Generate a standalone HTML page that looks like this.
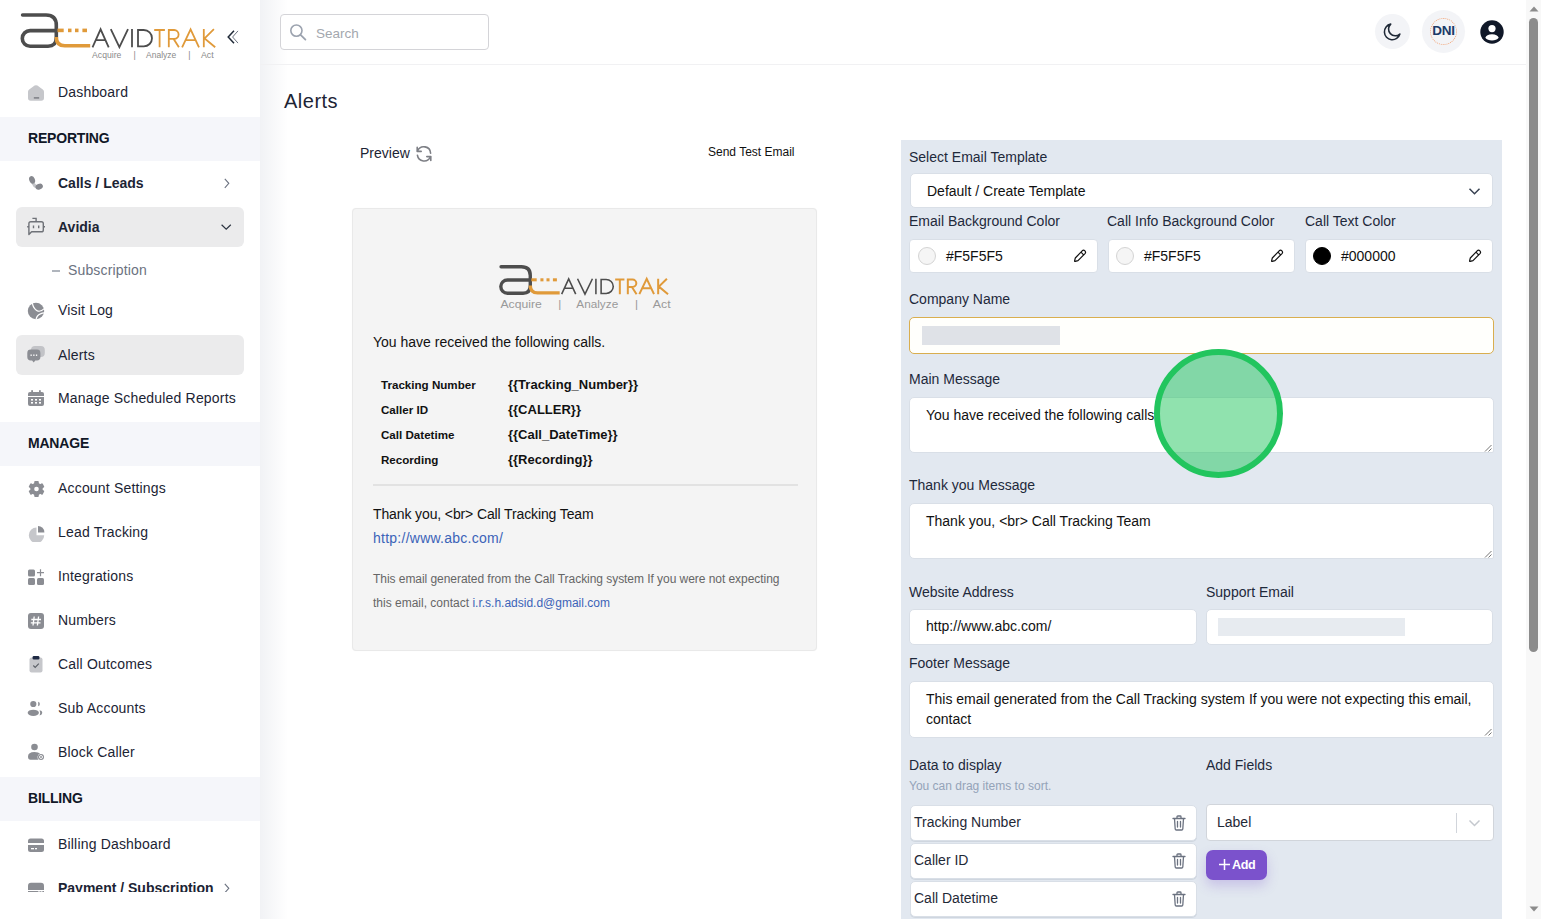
<!DOCTYPE html>
<html><head><meta charset="utf-8">
<style>
*{box-sizing:border-box;margin:0;padding:0}
html,body{width:1541px;height:919px;overflow:hidden;background:#fff;font-family:"Liberation Sans",sans-serif;color:#1c2434}
.abs{position:absolute}
#sb{position:absolute;left:0;top:0;width:260px;height:919px;background:#fff;overflow:hidden}
#sbshadow{position:absolute;left:260px;top:0;width:28px;height:919px;background:linear-gradient(to right,#f1f2f5,rgba(255,255,255,0))}
.it{position:absolute;left:16px;width:228px;height:40px;border-radius:6px}
.it .tx{position:absolute;left:42px;top:0;line-height:40px;font-size:14px;color:#1c2434;white-space:nowrap;letter-spacing:0.18px}
.it .ic{position:absolute;left:11px;top:12px;width:18px;height:17px}
.it.act{background:#ebebec}
.band{position:absolute;left:0;width:260px;height:44px;background:#f5f6fa}
.band span{position:absolute;left:28px;top:-1px;line-height:44px;font-size:14px;font-weight:bold;color:#111827;letter-spacing:-0.2px}
#hdr{position:absolute;left:260px;top:0;width:1266px;height:65px;border-bottom:1px solid #f1f1f3}
#search{position:absolute;left:280px;top:14px;width:209px;height:36px;border:1px solid #d4d4d8;border-radius:4px;background:#fff}
#scroll{position:absolute;left:1526px;top:0;width:15px;height:919px;background:#f8f8f8}
#thumb{position:absolute;left:1529px;top:18px;width:9px;height:634px;border-radius:5px;background:#8c8c8c}
.lbl{position:absolute;font-size:14px;color:#1e293b;white-space:nowrap}
.inp{position:absolute;background:#fff;border-radius:5px;border:1px solid #d9dfe7}
.itx{position:absolute;font-size:14px;color:#111;white-space:nowrap}
</style></head><body>
<div id="sb">

<!-- logo -->
<svg class="abs" style="left:0;top:0" width="260" height="70" viewBox="0 0 260 70">
<path d="M22.6 15 H46 Q56.3 15 56.3 25.3 V37.5 Q56.3 46.2 48 46.2 H30.1 A7.8 7.8 0 0 1 30.1 30.6 H56.3" fill="none" stroke="#4d4d4d" stroke-width="3.6" stroke-linecap="round"/>
<path d="M56.3 37 Q56.3 45.8 64.8 45.8 H90.2" fill="none" stroke="#e09a3a" stroke-width="3.6"/>
<rect x="57.5" y="28.6" width="6.200000000000003" height="3.6" fill="#e09a3a"/>
<rect x="68" y="28.6" width="3.5" height="3.6" fill="#e09a3a"/>
<rect x="75" y="28.6" width="3.5" height="3.6" fill="#e09a3a"/>
<rect x="82.4" y="28.6" width="4.599999999999994" height="3.6" fill="#e09a3a"/>
<path d="M92.5 47.3 L100.6 29.3 L108.7 47.3 M96 40.2 H105.3 M110.8 29.1 L119.4 47.2 L128 29.1 M132 29.1 V47.3 M138 30 H143.8 A8.2 8.2 0 0 1 143.8 46.4 H138 Z" fill="none" stroke="#4d4d4d" stroke-width="1.8"/>
<path d="M154.2 30 H164.9 M159.6 30 V47.3 M168.8 47.3 V30 H174.2 A4.4 4.4 0 0 1 174.2 38.8 H168.8 M173.5 38.8 L178.9 47.3 M182.1 47.3 L190.6 29.3 L199 47.3 M185.5 40.2 H195.7 M203.8 29.1 V47.3 M213.9 29.1 L204.6 38.4 L215.2 47.3" fill="none" stroke="#e09a3a" stroke-width="1.8"/>
<g font-family="Liberation Sans" font-size="8.6" fill="#8a8a8a">
<text x="92.1" y="57.6" textLength="29.2" lengthAdjust="spacingAndGlyphs">Acquire</text>
<text x="133.4" y="57.6">|</text>
<text x="146.1" y="57.6" textLength="30.2" lengthAdjust="spacingAndGlyphs">Analyze</text>
<text x="188.2" y="57.6">|</text>
<text x="200.9" y="57.6" textLength="12.7" lengthAdjust="spacingAndGlyphs">Act</text>
</g>
</svg>
<svg class="abs" style="left:220px;top:25px" width="24" height="24" viewBox="220 25 24 24"><path d="M234 30.7 L228.2 37 L234 43.2" fill="none" stroke="#1f2937" stroke-width="1.5"/><path d="M238 30.9 L232.6 37 L238 43.1" fill="none" stroke="#6b7280" stroke-width="1"/></svg>
<div class="it" style="top:72px"><svg class="abs" style="left:11px;top:12px" width="18" height="18" viewBox="0 0 18 18"><path d="M1 7.8 Q1 6.4 2.2 5.6 L7.6 1.6 Q9 0.7 10.4 1.6 L15.8 5.6 Q17 6.4 17 7.8 V14 Q17 16.8 14.2 16.8 H3.8 Q1 16.8 1 14 Z" fill="#c6c7cb"/><rect x="6.8" y="13" width="5.4" height="1.8" rx="0.3" fill="#86888e"/></svg><span class="tx" style="">Dashboard</span></div>
<div class="band" style="top:117px"><span>REPORTING</span></div>
<div class="it" style="top:163px"><svg class="abs" style="left:11px;top:10px" width="20" height="20" viewBox="27 173 20 20"><path d="M32.6 182.4 Q34 186 37.6 187.6" fill="none" stroke="#c3c4c8" stroke-width="3"/><ellipse cx="32.1" cy="179.9" rx="2.8" ry="3.9" transform="rotate(-22 32.1 179.9)" fill="#86888e"/><ellipse cx="39.2" cy="186.6" rx="3.8" ry="2.8" transform="rotate(-22 39.2 186.6)" fill="#86888e"/></svg><span class="tx" style="font-weight:bold;letter-spacing:0;">Calls / Leads</span><svg class="abs" style="left:207.5px;top:14.5px" width="6" height="11" viewBox="0 0 6 11"><path d="M0.8 0.8 L4.8 5.3 L0.8 9.8" fill="none" stroke="#6b7280" stroke-width="1.1"/></svg></div>
<div class="it act" style="top:207px"><svg class="abs" style="left:11px;top:9px" width="20" height="22" viewBox="27 216 20 22"><path d="M28.9 234.6 V223.6 Q28.9 221.7 30.8 221.7 H41.4 Q43.3 221.7 43.3 223.6 V229.9 Q43.3 231.8 41.4 231.8 H31.6 Z" fill="none" stroke="#6f7278" stroke-width="1.4" stroke-linejoin="round"/><path d="M32.4 218.4 H36.1 V221.7" fill="none" stroke="#6f7278" stroke-width="1.4"/><path d="M27.2 226.8 H28.9 M43.3 226.8 H45" stroke="#6f7278" stroke-width="1.4"/><path d="M33.5 225.4 V228.2 M38.7 225.4 V228.2" stroke="#6f7278" stroke-width="1.4"/></svg><span class="tx" style="font-weight:bold;letter-spacing:0;">Avidia</span><svg class="abs" style="left:204.5px;top:16.5px" width="11" height="7" viewBox="0 0 11 7"><path d="M0.6 0.8 L5.2 5.2 L9.8 0.8" fill="none" stroke="#2b3340" stroke-width="1.2"/></svg></div>
<div class="abs" style="left:52px;top:270px;width:8px;height:1.5px;background:#b0b5bd"></div><span class="abs" style="left:68px;top:261px;font-size:14px;color:#6b7280;line-height:18px;letter-spacing:0.15px">Subscription</span>
<div class="it" style="top:290px"><svg class="abs" style="left:11px;top:10px" width="20" height="20" viewBox="27 300 20 20"><circle cx="36" cy="311" r="8.2" fill="#8b8d93"/><path d="M32.3 302.8 Q33.2 308.6 37.4 310.9 Q40.6 312.2 44.6 308.4 M36 319.6 Q36.8 315.2 40.4 313.9 Q42.4 313.1 44.4 312.9" fill="none" stroke="#fff" stroke-width="1.2"/></svg><span class="tx" style="">Visit Log</span></div>
<div class="it act" style="top:335px"><svg class="abs" style="left:10px;top:9px" width="20" height="20" viewBox="26 344 20 20"><rect x="31" y="346" width="13.8" height="11" rx="4" fill="#c2c3c7"/><path d="M30.7 349.6 H37 Q40.4 349.6 40.4 353 V357 Q40.4 360.4 37 360.4 H35.3 L33.7 362.6 L32.1 360.4 H30.7 Q27.3 360.4 27.3 357 V353 Q27.3 349.6 30.7 349.6 Z" fill="#8b8d93"/><rect x="30.5" y="354.5" width="1.3" height="1.4" fill="#fff"/><rect x="33.2" y="354.5" width="1.3" height="1.4" fill="#fff"/><rect x="35.9" y="354.5" width="1.3" height="1.4" fill="#fff"/></svg><span class="tx" style="">Alerts</span></div>
<div class="it" style="top:378px"><svg class="abs" style="left:11px;top:11px" width="18" height="18" viewBox="0 0 18 18"><path d="M1 5 Q1 3 3 3 H15 Q17 3 17 5 V7 H1 Z" fill="#8b8d93"/><rect x="4.2" y="1" width="1.8" height="3.5" rx="0.8" fill="#8b8d93"/><rect x="12" y="1" width="1.8" height="3.5" rx="0.8" fill="#8b8d93"/><path d="M1 8 H17 V15 Q17 17 15 17 H3 Q1 17 1 15 Z" fill="#8b8d93"/><g fill="#fff"><rect x="4" y="10" width="2" height="1.6"/><rect x="8" y="10" width="2" height="1.6"/><rect x="12" y="10" width="2" height="1.6"/><rect x="4" y="13" width="2" height="1.6"/><rect x="8" y="13" width="2" height="1.6"/><rect x="12" y="13" width="2" height="1.6"/></g></svg><span class="tx" style="">Manage Scheduled Reports</span></div>
<div class="band" style="top:422px"><span>MANAGE</span></div>
<div class="it" style="top:468px"><svg class="abs" style="left:11px;top:12px" width="18" height="18" viewBox="0 0 18 18"><circle cx="9.5" cy="9" r="6.2" fill="#8b8d93"/><rect x="7.20" y="1.00" width="4.6" height="4" rx="1" transform="rotate(0 9.50 9.00)" fill="#8b8d93"/><rect x="7.20" y="1.00" width="4.6" height="4" rx="1" transform="rotate(60 9.50 9.00)" fill="#8b8d93"/><rect x="7.20" y="1.00" width="4.6" height="4" rx="1" transform="rotate(120 9.50 9.00)" fill="#8b8d93"/><rect x="7.20" y="1.00" width="4.6" height="4" rx="1" transform="rotate(180 9.50 9.00)" fill="#8b8d93"/><rect x="7.20" y="1.00" width="4.6" height="4" rx="1" transform="rotate(240 9.50 9.00)" fill="#8b8d93"/><rect x="7.20" y="1.00" width="4.6" height="4" rx="1" transform="rotate(300 9.50 9.00)" fill="#8b8d93"/><circle cx="9.5" cy="9" r="2.3" fill="#fff"/></svg><span class="tx" style="">Account Settings</span></div>
<div class="it" style="top:512px"><svg class="abs" style="left:11px;top:11.5px" width="18" height="18" viewBox="0 0 18 18"><path d="M9.5 3.6 A7.7 7.7 0 1 0 17.2 11.3 H9.5 Z" fill="#c6c7cb"/><path d="M11 2 A6.4 6.4 0 0 1 17.4 8.4 H11 Z" fill="#8b8d93"/></svg><span class="tx" style="">Lead Tracking</span></div>
<div class="it" style="top:556px"><svg class="abs" style="left:11px;top:12px" width="18" height="18" viewBox="0 0 18 18"><rect x="1" y="1.5" width="7" height="7" rx="1.5" fill="#8b8d93"/><rect x="1" y="10" width="7" height="7" rx="1.5" fill="#8b8d93"/><rect x="10" y="10" width="7" height="7" rx="1.5" fill="#8b8d93"/><path d="M13.5 1.2 V8.2 M10 4.7 H17" stroke="#8b8d93" stroke-width="1.2"/></svg><span class="tx" style="">Integrations</span></div>
<div class="it" style="top:600px"><svg class="abs" style="left:11px;top:11.7px" width="18" height="18" viewBox="0 0 18 18"><rect x="1" y="1" width="16" height="16" rx="3" fill="#8b8d93"/><path d="M7.2 4.5 L6 13.5 M11.6 4.5 L10.4 13.5 M4.3 7.5 H14 M3.8 10.8 H13.5" stroke="#fff" stroke-width="1.3"/></svg><span class="tx" style="">Numbers</span></div>
<div class="it" style="top:644px"><svg class="abs" style="left:11px;top:11px" width="18" height="18" viewBox="0 0 18 18"><rect x="2.5" y="2.6" width="13" height="14.9" rx="2" fill="#c6c7cb"/><rect x="5.6" y="1" width="6.8" height="3.4" rx="1.2" fill="#1f2a44"/><path d="M6.3 10.5 L8.2 12.4 L11.8 8.6" fill="none" stroke="#5b5f66" stroke-width="1.1"/></svg><span class="tx" style="">Call Outcomes</span></div>
<div class="it" style="top:688px"><svg class="abs" style="left:11px;top:11px" width="18" height="18" viewBox="0 0 18 18"><circle cx="6.3" cy="5" r="3.1" fill="#8b8d93"/><path d="M11.2 2.8 A2.3 2.3 0 0 1 11.2 7.2 Z" fill="#8b8d93"/><ellipse cx="6.3" cy="13.8" rx="5.6" ry="3.1" fill="#8b8d93"/><path d="M12.6 11.2 Q15.3 11.6 15.3 13.8 Q15.3 16 12.6 16.4 Q13.8 13.8 12.6 11.2 Z" fill="#8b8d93"/></svg><span class="tx" style="">Sub Accounts</span></div>
<div class="it" style="top:732px"><svg class="abs" style="left:11px;top:11px" width="18" height="18" viewBox="0 0 18 18"><circle cx="7.5" cy="4" r="3.3" fill="#8b8d93"/><path d="M1 13.5 Q1 9 7.5 9 Q11.5 9 13 10.5 A4 4 0 0 0 11.5 16.8 H3.5 Q1 16.8 1 13.5 Z" fill="#8b8d93"/><circle cx="14" cy="14" r="3" fill="#8b8d93"/><circle cx="14" cy="14" r="1.5" fill="none" stroke="#fff" stroke-width="0.9"/></svg><span class="tx" style="">Block Caller</span></div>
<div class="band" style="top:777px"><span>BILLING</span></div>
<div class="it" style="top:824px"><svg class="abs" style="left:11px;top:13px" width="18" height="18" viewBox="0 0 18 18"><path d="M1 4 Q1 1.5 3.5 1.5 H14.5 Q17 1.5 17 4 V6 H1 Z" fill="#8b8d93"/><path d="M1 8 H17 V12.5 Q17 15 14.5 15 H3.5 Q1 15 1 12.5 Z" fill="#8b8d93"/><rect x="4" y="11" width="3" height="1.3" fill="#fff"/><rect x="8" y="11" width="2" height="1.3" fill="#fff"/></svg><span class="tx" style="">Billing Dashboard</span></div>
<div class="abs" style="left:0;top:0;width:260px;height:892px;overflow:hidden"><div class="it" style="top:868px"><svg class="abs" style="left:11px;top:14px" width="18" height="18" viewBox="0 0 18 18"><path d="M1 4 Q1 0.7 4 0.7 H14 Q17 0.7 17 4 V8 H1 Z" fill="#8b8d93"/><path d="M1 8.9 H17 V12.5 Q17 15 14.5 15 H3.5 Q1 15 1 12.5 Z" fill="#8b8d93"/><circle cx="12" cy="10.6" r="1.3" fill="#fff"/><circle cx="14.6" cy="10.6" r="1.3" fill="#fff"/></svg><span class="tx" style="font-weight:bold;letter-spacing:0;">Payment / Subscription</span><svg class="abs" style="left:207.5px;top:14.5px" width="6" height="11" viewBox="0 0 6 11"><path d="M0.8 0.8 L4.8 5.3 L0.8 9.8" fill="none" stroke="#6b7280" stroke-width="1.1"/></svg></div>
</div>
</div>
<div id="sbshadow"></div>
<div id="hdr"></div>
<div id="search"></div>
<div id="scroll"></div>
<div id="thumb"></div>

<!-- header -->
<svg class="abs" style="left:289px;top:23px" width="19" height="19" viewBox="0 0 19 19"><circle cx="7.4" cy="7.6" r="5.6" fill="none" stroke="#9ca3af" stroke-width="1.6"/><path d="M11.6 11.8 L16.4 16.6" stroke="#9ca3af" stroke-width="1.8" stroke-linecap="round"/></svg>
<span class="abs" style="left:316px;top:25px;font-size:13.5px;line-height:17px;color:#a3a7ae">Search</span>
<div class="abs" style="left:1375px;top:14px;width:35px;height:35px;border-radius:50%;background:#f3f4f7"></div>
<svg class="abs" style="left:1381px;top:21px" width="22" height="22" viewBox="0 0 24 24"><path d="M20.6 14.2 A8.6 8.6 0 1 1 10.6 3.4 A6.9 6.9 0 0 0 20.6 14.2 Z" fill="none" stroke="#1f2937" stroke-width="1.7" stroke-linejoin="round"/></svg>
<div class="abs" style="left:1422px;top:10px;width:43px;height:43px;border-radius:50%;background:#f3f4f7"></div>
<div class="abs" style="left:1430px;top:18px;width:27px;height:27px;border-radius:50%;border:1px dotted #f2a77c;"></div>
<span class="abs" style="left:1429px;top:23px;width:29px;text-align:center;font-size:13.5px;line-height:16px;font-weight:bold;color:#1b3a68;letter-spacing:-0.2px">DNI</span>
<svg class="abs" style="left:1480px;top:20px" width="24" height="24" viewBox="0 0 24 24"><circle cx="12" cy="12" r="11.7" fill="#101828"/><circle cx="12" cy="8.6" r="3.6" fill="#fff"/><path d="M5.3 17.8 Q6.5 14.2 12 14.2 Q17.5 14.2 18.7 17.8 Q16.5 20.5 12 20.5 Q7.5 20.5 5.3 17.8 Z" fill="#fff"/></svg>
<svg class="abs" style="left:1527px;top:4px" width="14" height="10" viewBox="0 0 14 10"><path d="M2.5 7.5 L7 2.5 L11.5 7.5 Z" fill="#8c8c8c"/></svg>
<svg class="abs" style="left:1527px;top:904px" width="14" height="10" viewBox="0 0 14 10"><path d="M2.5 2.5 L7 7.5 L11.5 2.5 Z" fill="#8c8c8c"/></svg>

<span class="abs" style="left:284px;top:90px;font-size:20px;line-height:23px;color:#1c2434;letter-spacing:0.5px">Alerts</span>

<span class="abs" style="left:360px;top:145px;font-size:14px;line-height:17px;color:#1c2434">Preview</span>
<svg class="abs" style="left:414px;top:144px" width="20" height="20" viewBox="414 144 20 20"><path d="M417.6 150.8 A6.8 6.8 0 0 1 430.6 153.3" fill="none" stroke="#7d7f85" stroke-width="1.6" stroke-linecap="round"/><path d="M417.2 147.4 V151.4 H421.2" fill="none" stroke="#7d7f85" stroke-width="1.6" stroke-linecap="round" stroke-linejoin="round"/><path d="M417.4 155.2 A6.8 6.8 0 0 0 430.4 156.8" fill="none" stroke="#7d7f85" stroke-width="1.6" stroke-linecap="round"/><path d="M426.8 156.6 H430.8 V160.4" fill="none" stroke="#7d7f85" stroke-width="1.6" stroke-linecap="round" stroke-linejoin="round"/></svg>
<span class="abs" style="left:708px;top:145px;font-size:12px;line-height:15px;color:#111">Send Test Email</span>

<!-- preview card -->
<div class="abs" style="left:352px;top:208px;width:465px;height:443px;background:#f4f4f4;border:1px solid #e9e9e9;border-radius:4px;box-shadow:0 0 1px rgba(0,0,0,0.06)"></div>
<svg class="abs" style="left:480px;top:250px" width="210" height="70" viewBox="480 250 210 70">
<g transform="translate(499.5 265.2) scale(0.867 0.85) translate(-20.8 -13.2)">
<path d="M22.6 15 H46 Q56.3 15 56.3 25.3 V37.5 Q56.3 46.2 48 46.2 H30.1 A7.8 7.8 0 0 1 30.1 30.6 H56.3" fill="none" stroke="#4d4d4d" stroke-width="3.9" stroke-linecap="round"/>
<path d="M56.3 37 Q56.3 45.8 64.8 45.8 H90.2" fill="none" stroke="#e09a3a" stroke-width="3.9"/>
<rect x="57.5" y="28.6" width="6.200000000000003" height="3.6" fill="#e09a3a"/>
<rect x="68" y="28.6" width="3.5" height="3.6" fill="#e09a3a"/>
<rect x="75" y="28.6" width="3.5" height="3.6" fill="#e09a3a"/>
<rect x="82.4" y="28.6" width="4.599999999999994" height="3.6" fill="#e09a3a"/>
<path d="M92.5 47.3 L100.6 29.3 L108.7 47.3 M96 40.2 H105.3 M110.8 29.1 L119.4 47.2 L128 29.1 M132 29.1 V47.3 M138 30 H143.8 A8.2 8.2 0 0 1 143.8 46.4 H138 Z" fill="none" stroke="#4d4d4d" stroke-width="1.8"/>
<path d="M154.2 30 H164.9 M159.6 30 V47.3 M168.8 47.3 V30 H174.2 A4.4 4.4 0 0 1 174.2 38.8 H168.8 M173.5 38.8 L178.9 47.3 M182.1 47.3 L190.6 29.3 L199 47.3 M185.5 40.2 H195.7 M203.8 29.1 V47.3 M213.9 29.1 L204.6 38.4 L215.2 47.3" fill="none" stroke="#e09a3a" stroke-width="2.3"/>
</g>
<g font-family="Liberation Sans" font-size="11.6" fill="#999">
<text x="500.5" y="308" textLength="41.3" lengthAdjust="spacingAndGlyphs">Acquire</text>
<text x="558.3" y="308">|</text>
<text x="576.3" y="308" textLength="41.9" lengthAdjust="spacingAndGlyphs">Analyze</text>
<text x="635.1" y="308">|</text>
<text x="652.8" y="308" textLength="17.8" lengthAdjust="spacingAndGlyphs">Act</text>
</g>
</svg>
<span class="abs" style="left:373px;top:334px;font-size:14px;line-height:17px;color:#111">You have received the following calls.</span>
<span class="abs" style="left:381px;top:377px;font-size:11.6px;line-height:15px;color:#111;font-weight:bold">Tracking Number</span>
<span class="abs" style="left:508px;top:377px;font-size:13px;line-height:16px;color:#111;font-weight:bold">{{Tracking_Number}}</span>
<span class="abs" style="left:381px;top:402px;font-size:11.6px;line-height:15px;color:#111;font-weight:bold">Caller ID</span>
<span class="abs" style="left:508px;top:402px;font-size:13px;line-height:16px;color:#111;font-weight:bold">{{CALLER}}</span>
<span class="abs" style="left:381px;top:427px;font-size:11.6px;line-height:15px;color:#111;font-weight:bold">Call Datetime</span>
<span class="abs" style="left:508px;top:427px;font-size:13px;line-height:16px;color:#111;font-weight:bold">{{Call_DateTime}}</span>
<span class="abs" style="left:381px;top:452px;font-size:11.6px;line-height:15px;color:#111;font-weight:bold">Recording</span>
<span class="abs" style="left:508px;top:452px;font-size:13px;line-height:16px;color:#111;font-weight:bold">{{Recording}}</span>
<div class="abs" style="left:373px;top:484px;width:425px;height:2px;background:#e2e2e2"></div>
<span class="abs" style="left:373px;top:506px;font-size:14px;line-height:17px;color:#111;letter-spacing:-0.12px">Thank you, &lt;br&gt; Call Tracking Team</span>
<span class="abs" style="left:373px;top:530px;font-size:14px;line-height:17px;color:#3b63b8;letter-spacing:0.25px">http://www.abc.com/</span>
<span class="abs" style="left:373px;top:572px;font-size:12px;line-height:15px;color:#666;letter-spacing:-0.05px">This email generated from the Call Tracking system If you were not expecting</span>
<span class="abs" style="left:373px;top:596px;font-size:12px;line-height:15px;color:#666;letter-spacing:0px">this email, contact <span style="color:#3b63b8">i.r.s.h.adsid.d@gmail.com</span></span>

<div class="abs" style="left:901px;top:140px;width:601px;height:779px;background:#e2e8f0"></div>
<span class="lbl" style="left:909px;top:149px;line-height:17px;">Select Email Template</span>
<div class="inp" style="left:910px;top:173px;width:583px;height:35px;"></div>
<span class="itx" style="left:927px;top:183px;line-height:17px;">Default / Create Template</span>
<svg class="abs" style="left:1468px;top:187px" width="13" height="9" viewBox="0 0 13 9"><path d="M1.5 1.8 L6.5 6.8 L11.5 1.8" fill="none" stroke="#374151" stroke-width="1.5"/></svg>
<span class="lbl" style="left:909px;top:213px;line-height:17px;">Email Background Color</span>
<span class="lbl" style="left:1107px;top:213px;line-height:17px;">Call Info Background Color</span>
<span class="lbl" style="left:1305px;top:213px;line-height:17px;">Call Text Color</span>
<div class="inp" style="left:909px;top:239px;width:189px;height:34px;border-radius:4px;"></div>
<div class="abs" style="left:918px;top:247px;width:18px;height:18px;border-radius:50%;background:#f5f5f5;border:1px solid #d4d4d4"></div>
<span class="itx" style="left:946px;top:248px;line-height:17px;">#F5F5F5</span>
<svg class="abs" style="left:1073px;top:249px" width="14" height="14" viewBox="0 0 14 14"><path d="M9.2 1.8 Q10.6 0.6 11.9 1.9 Q13.2 3.2 12 4.6 L5 11.6 L2.2 12.4 Q1.5 12.5 1.6 11.8 L2.3 9 Z M8 3.2 L10.6 5.8" fill="none" stroke="#111" stroke-width="1.2" stroke-linejoin="round"/></svg>
<div class="inp" style="left:1108px;top:239px;width:187px;height:34px;border-radius:4px;"></div>
<div class="abs" style="left:1116px;top:247px;width:18px;height:18px;border-radius:50%;background:#f5f5f5;border:1px solid #d4d4d4"></div>
<span class="itx" style="left:1144px;top:248px;line-height:17px;">#F5F5F5</span>
<svg class="abs" style="left:1270px;top:249px" width="14" height="14" viewBox="0 0 14 14"><path d="M9.2 1.8 Q10.6 0.6 11.9 1.9 Q13.2 3.2 12 4.6 L5 11.6 L2.2 12.4 Q1.5 12.5 1.6 11.8 L2.3 9 Z M8 3.2 L10.6 5.8" fill="none" stroke="#111" stroke-width="1.2" stroke-linejoin="round"/></svg>
<div class="inp" style="left:1305px;top:239px;width:188px;height:34px;border-radius:4px;"></div>
<div class="abs" style="left:1313px;top:247px;width:18px;height:18px;border-radius:50%;background:#000;border:1px solid #000"></div>
<span class="itx" style="left:1341px;top:248px;line-height:17px;">#000000</span>
<svg class="abs" style="left:1468px;top:249px" width="14" height="14" viewBox="0 0 14 14"><path d="M9.2 1.8 Q10.6 0.6 11.9 1.9 Q13.2 3.2 12 4.6 L5 11.6 L2.2 12.4 Q1.5 12.5 1.6 11.8 L2.3 9 Z M8 3.2 L10.6 5.8" fill="none" stroke="#111" stroke-width="1.2" stroke-linejoin="round"/></svg>
<span class="lbl" style="left:909px;top:291px;line-height:17px;">Company Name</span>
<div class="inp" style="left:909px;top:317px;width:585px;height:37px;border:1px solid #d9ae4f;background:#fffffc;"></div>
<div class="abs" style="left:922px;top:326px;width:138px;height:19px;background:#dfe2e7"></div>
<span class="lbl" style="left:909px;top:371px;line-height:17px;">Main Message</span>
<div class="inp" style="left:909px;top:397px;width:585px;height:56px;border-bottom-right-radius:2px;"></div>
<span class="itx" style="left:926px;top:407px;line-height:17px;">You have received the following calls</span>
<svg class="abs" style="left:1483px;top:443px" width="9" height="9" viewBox="0 0 9 9"><path d="M8.5 2 L2 8.5 M8.5 5.5 L5.5 8.5" stroke="#777" stroke-width="1"/></svg>
<span class="lbl" style="left:909px;top:477px;line-height:17px;">Thank you Message</span>
<div class="inp" style="left:909px;top:503px;width:585px;height:56px;border-bottom-right-radius:2px;"></div>
<span class="itx" style="left:926px;top:513px;line-height:17px;">Thank you, &lt;br&gt; Call Tracking Team</span>
<svg class="abs" style="left:1483px;top:549px" width="9" height="9" viewBox="0 0 9 9"><path d="M8.5 2 L2 8.5 M8.5 5.5 L5.5 8.5" stroke="#777" stroke-width="1"/></svg>
<span class="lbl" style="left:909px;top:584px;line-height:17px;">Website Address</span>
<span class="lbl" style="left:1206px;top:584px;line-height:17px;">Support Email</span>
<div class="inp" style="left:909px;top:609px;width:288px;height:36px;"></div>
<span class="itx" style="left:926px;top:618px;line-height:17px;">http://www.abc.com/</span>
<div class="inp" style="left:1206px;top:609px;width:287px;height:36px;"></div>
<div class="abs" style="left:1218px;top:618px;width:187px;height:18px;background:#e7ebf0"></div>
<span class="lbl" style="left:909px;top:655px;line-height:17px;">Footer Message</span>
<div class="inp" style="left:909px;top:681px;width:585px;height:57px;border-bottom-right-radius:2px;"></div>
<span class="itx" style="left:926px;top:689px;width:560px;line-height:20px;white-space:normal">This email generated from the Call Tracking system If you were not expecting this email, contact</span>
<svg class="abs" style="left:1483px;top:727px" width="9" height="9" viewBox="0 0 9 9"><path d="M8.5 2 L2 8.5 M8.5 5.5 L5.5 8.5" stroke="#777" stroke-width="1"/></svg>
<span class="lbl" style="left:909px;top:757px;line-height:17px;">Data to display</span>
<span class="lbl" style="left:1206px;top:757px;line-height:17px;">Add Fields</span>
<span class="abs" style="left:909px;top:779px;font-size:12px;line-height:15px;color:#94a3b8">You can drag items to sort.</span>
<div class="inp" style="left:910px;top:805px;width:287px;height:36px;box-shadow:0 1px 0 #cfd6df;"></div>
<span class="itx" style="left:914px;top:814px;line-height:17px;color:#1f2937;">Tracking Number</span>
<svg class="abs" style="left:1172px;top:815px" width="14" height="16" viewBox="0 0 14 16"><path d="M1 3.5 H13 M5 3.5 V1.8 Q5 1 5.8 1 H8.2 Q9 1 9 1.8 V3.5 M2.5 3.5 L3.2 14 Q3.3 15 4.3 15 H9.7 Q10.7 15 10.8 14 L11.5 3.5 M5.5 6.5 V12 M8.5 6.5 V12" fill="none" stroke="#6b7280" stroke-width="1.3" stroke-linecap="round" stroke-linejoin="round"/></svg>
<div class="inp" style="left:910px;top:843px;width:287px;height:36px;box-shadow:0 1px 0 #cfd6df;"></div>
<span class="itx" style="left:914px;top:852px;line-height:17px;color:#1f2937;">Caller ID</span>
<svg class="abs" style="left:1172px;top:853px" width="14" height="16" viewBox="0 0 14 16"><path d="M1 3.5 H13 M5 3.5 V1.8 Q5 1 5.8 1 H8.2 Q9 1 9 1.8 V3.5 M2.5 3.5 L3.2 14 Q3.3 15 4.3 15 H9.7 Q10.7 15 10.8 14 L11.5 3.5 M5.5 6.5 V12 M8.5 6.5 V12" fill="none" stroke="#6b7280" stroke-width="1.3" stroke-linecap="round" stroke-linejoin="round"/></svg>
<div class="inp" style="left:910px;top:881px;width:287px;height:36px;box-shadow:0 1px 0 #cfd6df;"></div>
<span class="itx" style="left:914px;top:890px;line-height:17px;color:#1f2937;">Call Datetime</span>
<svg class="abs" style="left:1172px;top:891px" width="14" height="16" viewBox="0 0 14 16"><path d="M1 3.5 H13 M5 3.5 V1.8 Q5 1 5.8 1 H8.2 Q9 1 9 1.8 V3.5 M2.5 3.5 L3.2 14 Q3.3 15 4.3 15 H9.7 Q10.7 15 10.8 14 L11.5 3.5 M5.5 6.5 V12 M8.5 6.5 V12" fill="none" stroke="#6b7280" stroke-width="1.3" stroke-linecap="round" stroke-linejoin="round"/></svg>
<div class="inp" style="left:1206px;top:804px;width:288px;height:37px;border:1px solid #d1d5db;border-radius:4px;"></div>
<span class="itx" style="left:1217px;top:814px;line-height:17px;color:#1f2937;">Label</span>
<div class="abs" style="left:1456px;top:813px;width:1px;height:20px;background:#d1d5db"></div>
<svg class="abs" style="left:1468px;top:819px" width="13" height="8" viewBox="0 0 13 8"><path d="M1.5 1.5 L6.5 6.5 L11.5 1.5" fill="none" stroke="#c4c8ce" stroke-width="1.5"/></svg>
<div class="abs" style="left:1206px;top:850px;width:61px;height:30px;border-radius:7px;background:#7b52cc;box-shadow:0 6px 12px rgba(123,82,204,0.25)"></div>
<svg class="abs" style="left:1218px;top:858px" width="13" height="13" viewBox="0 0 13 13"><path d="M6.5 1 V12 M1 6.5 H12" stroke="#fff" stroke-width="1.5"/></svg><span class="abs" style="left:1232px;top:857px;font-size:12.6px;line-height:16px;color:#fff;font-weight:bold;letter-spacing:-0.4px">Add</span>
<div class="abs" style="left:1154px;top:349px;width:129px;height:129px;border-radius:50%;border:6px solid #22c55e;background:rgba(34,197,94,0.5)"></div>

</body></html>
